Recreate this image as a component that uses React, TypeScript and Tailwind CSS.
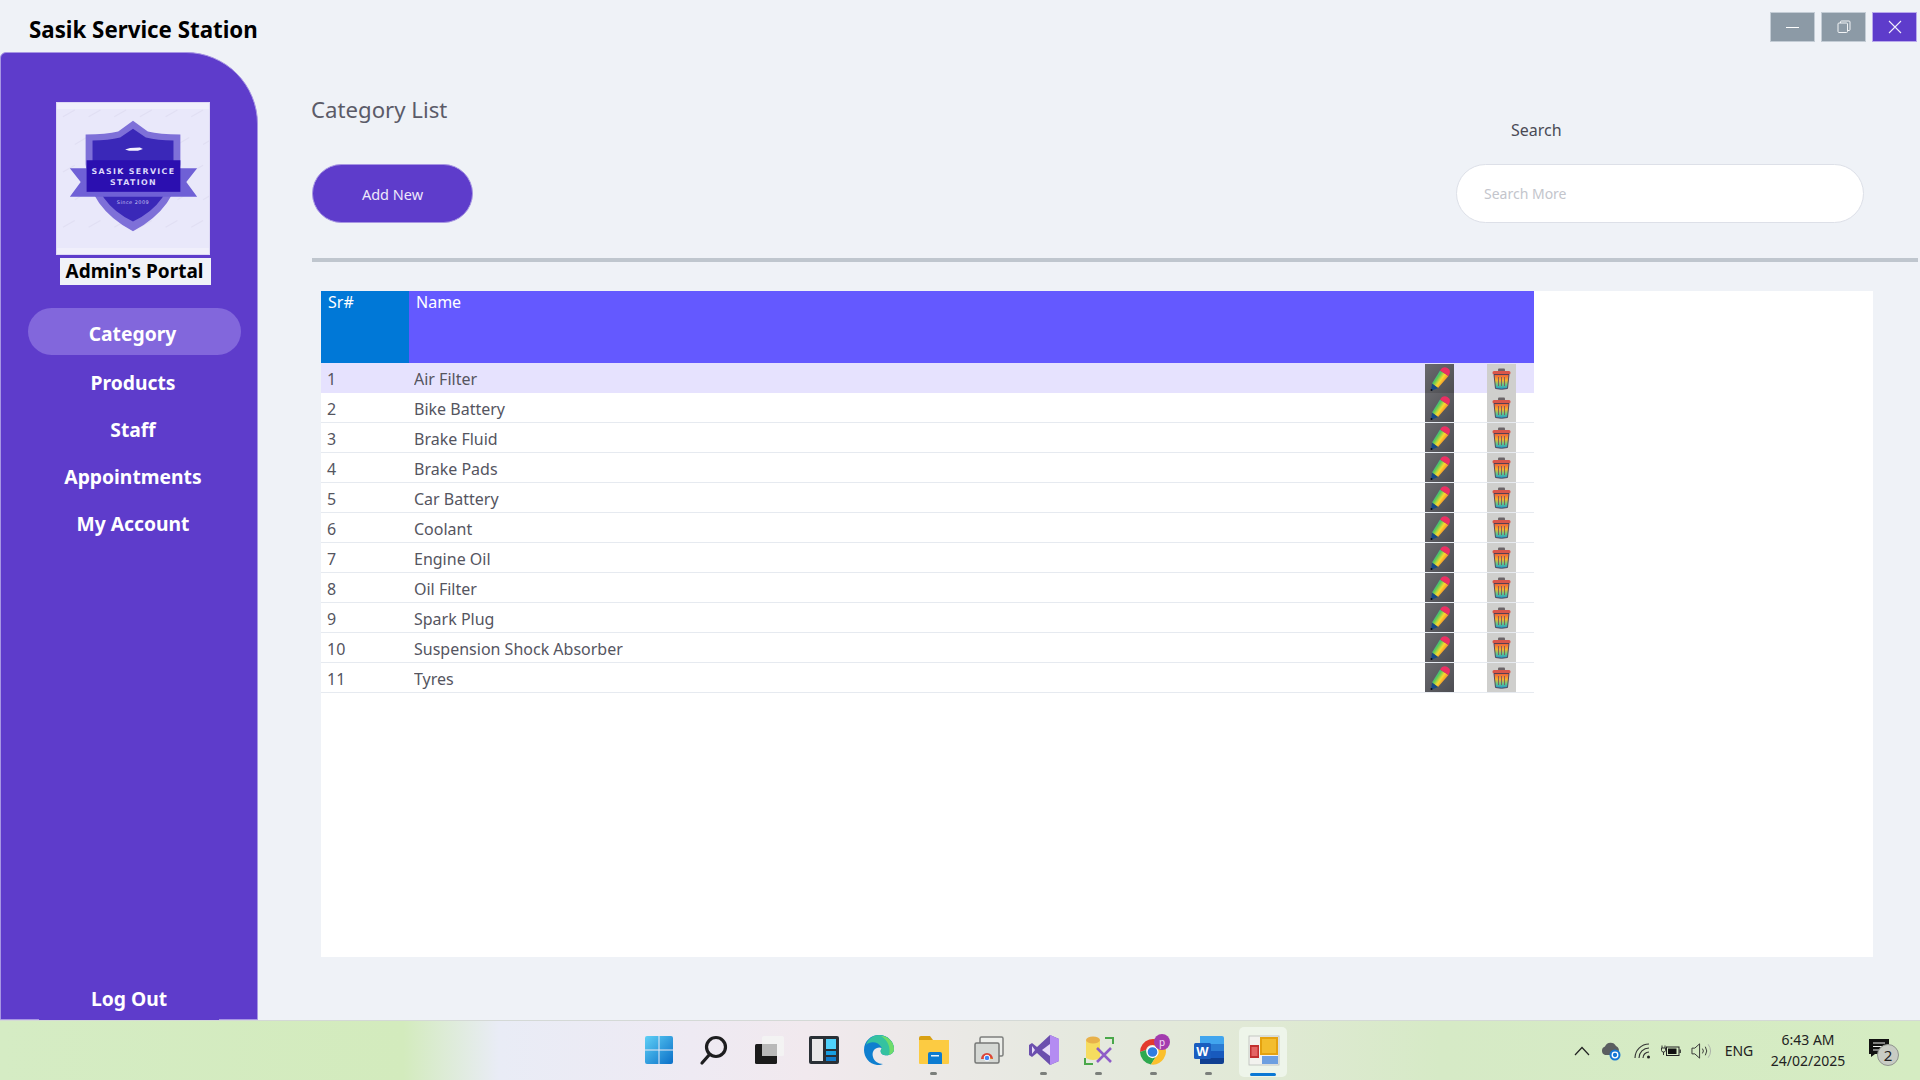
import { useId } from 'react'

const categories = [
  'Air Filter',
  'Bike Battery',
  'Brake Fluid',
  'Brake Pads',
  'Car Battery',
  'Coolant',
  'Engine Oil',
  'Oil Filter',
  'Spark Plug',
  'Suspension Shock Absorber',
  'Tyres',
]

const navItems = ['Category', 'Products', 'Staff', 'Appointments', 'My Account']

const watermark = Array.from({ length: 30 }, (_, i) => ({
  x: 6 + (i % 6) * 26 + (Math.floor(i / 6) % 2) * 12,
  y: 14 + Math.floor(i / 6) * 28,
}))

function Logo() {
  return (
    <svg viewBox="0 0 154 153" className="w-[152px] h-[151px] block">
      <rect width="154" height="153" fill="#f0effb" />
      <rect y="6" width="154" height="141" fill="#e9e8fa" />
      {watermark.map((p) => (
        <path key={`${p.x}-${p.y}`} d={`M${p.x} ${p.y} l12 -7`} stroke="#e1dff3" strokeWidth="1.2" />
      ))}
      <path d="M77 18 L92 29 Q104 32 125 32 L125 62 Q122 106 77 130 Q32 106 29 62 L29 32 Q50 32 62 29 Z" fill="#7e70d8" />
      <path d="M77 26 L90 35 Q102 38 118 38 L118 62 Q115 102 77 120 Q39 102 36 62 L36 38 Q52 38 64 35 Z" fill="#3a28b8" />
      <path d="M13 66 L142 66 L131 80 L142 95 L13 95 L24 80 Z" fill="#6f60d6" />
      <rect x="30" y="58" width="95" height="32" fill="#2b0fb0" />
      <path d="M69 47 L74 45.5 L84 45 L87 46.5 L82 48.5 L73 48.5 Z" fill="#f4f2ff" />
      <text x="77.5" y="72" textAnchor="middle" fontSize="8" fontWeight="700" letterSpacing="1.35" fill="#dcd8fb" fontFamily="'DejaVu Sans', sans-serif">SASIK SERVICE</text>
      <text x="77.5" y="83" textAnchor="middle" fontSize="8" fontWeight="700" letterSpacing="1.35" fill="#dcd8fb" fontFamily="'DejaVu Sans', sans-serif">STATION</text>
      <text x="77" y="102" textAnchor="middle" fontSize="5" letterSpacing="0.5" fill="#c9c3f2" fontFamily="'DejaVu Sans', sans-serif">Since 2009</text>
    </svg>
  )
}

function PencilIcon() {
  const id = useId()
  return (
    <div className="w-[29px] h-[29px] bg-[linear-gradient(135deg,#6a6a6e,#4d4d52)]">
      <svg viewBox="0 0 29 29" className="w-[29px] h-[29px] blur-[0.4px]">
        <defs>
          <linearGradient id={id} x1="0.1" y1="0.2" x2="0.9" y2="0.8">
            <stop offset="0" stopColor="#2f8fe0" />
            <stop offset="0.3" stopColor="#54c85a" />
            <stop offset="0.55" stopColor="#f7d92e" />
            <stop offset="0.8" stopColor="#f78a2a" />
            <stop offset="1" stopColor="#e8384e" />
          </linearGradient>
        </defs>
        <path d="M15 6.5 L23.5 12 L13 24 L7 19.5 Z" fill={`url(#${id})`} />
        <path d="M17 4 Q20 2.5 22.5 4 L24.5 5.8 Q25.5 8.5 24 11 L23.5 12 L15 6.5 Z" fill="#ea2f63" />
        <path d="M7 19.5 L13 24 L6 27 Z" fill="#174a86" />
        <circle cx="6.5" cy="26" r="1" fill="#0d0d12" />
      </svg>
    </div>
  )
}

function TrashIcon() {
  const id = useId()
  return (
    <div className="w-[29px] h-[29px] bg-[#cfcfcd]">
      <svg viewBox="0 0 29 29" className="w-[29px] h-[29px] blur-[0.4px]">
        <defs>
          <linearGradient id={id} x1="0" y1="0" x2="0" y2="1">
            <stop offset="0" stopColor="#ee5a3c" />
            <stop offset="0.4" stopColor="#f8b32e" />
            <stop offset="0.7" stopColor="#5ec98a" />
            <stop offset="1" stopColor="#1f8fd6" />
          </linearGradient>
        </defs>
        <rect x="11" y="4.5" width="7" height="3" rx="1" fill="#6b6468" />
        <rect x="5.5" y="7" width="18" height="3.6" rx="1.5" fill="#d9564a" />
        <path d="M7 10.5 L22 10.5 L20.5 24.5 Q14.5 26 8.5 24.5 Z" fill={`url(#${id})`} stroke="#4a3a50" strokeWidth="0.9" />
        <path d="M11.5 13 V22 M14.5 13 V22 M17.5 13 V22" stroke="#7a5560" strokeWidth="0.9" />
      </svg>
    </div>
  )
}

function WindowButtons() {
  return (
    <div className="flex gap-[6px] pr-[3px] pt-3">
      <button className="w-[45px] h-[30px] bg-[#8c9aa6] border border-[#c3ccd5] flex items-center justify-center">
        <span className="block w-[13px] h-px bg-white" />
      </button>
      <button className="w-[45px] h-[30px] bg-[#8c9aa6] border border-[#c3ccd5] flex items-center justify-center">
        <svg viewBox="0 0 14 14" className="w-[14px] h-[14px]" fill="none" stroke="#f2f4f6" strokeWidth="1">
          <rect x="1" y="3" width="9.5" height="9.5" rx="1" />
          <path d="M3.5 3 V2 Q3.5 1 4.5 1 H12 Q13 1 13 2 V9.5 Q13 10.5 12 10.5 H10.5" />
        </svg>
      </button>
      <button className="w-[45px] h-[30px] bg-[#5e3ccb] border border-[#b9a9ec] flex items-center justify-center">
        <svg viewBox="0 0 14 14" className="w-[14px] h-[14px]" stroke="#f2eefc" strokeWidth="1.1">
          <path d="M1 1 L13 13 M13 1 L1 13" />
        </svg>
      </button>
    </div>
  )
}

function Sidebar() {
  return (
    <aside className="w-[258px] h-full bg-[#5e3ccb] border border-[#a796e3] rounded-tl-[6px] rounded-tr-[72px] flex flex-col items-start -mb-px relative">
      <div className="mt-[49px] ml-[55px] border border-[#ddd8f5]">
        <Logo />
      </div>
      <div className="w-[151px] h-[27px] mt-[3px] ml-[59px] pr-[2px] bg-[#f0f2f8] text-black font-bold text-[19px] leading-[27px] text-center">
        Admin's Portal
      </div>
      <nav className="w-full pl-[8px] flex flex-col items-center mt-[23px] text-white font-bold text-[19.3px]">
        {navItems.map((item, i) => (
          <a
            key={item}
            className={
              i === 0
                ? 'w-[213px] h-[47px] ml-[2px] pr-[3px] pt-[5px] rounded-full bg-[#8267dc] flex items-center justify-center'
                : `h-[47px] pt-[5px] flex items-center justify-center ${i === 1 ? 'mt-[2px]' : ''}`
            }
          >
            {item}
          </a>
        ))}
      </nav>
      <div className="mt-auto ml-[38px] w-[180px] h-[42px] -mb-px bg-[#5e3ccb] text-white font-bold text-[19.3px] flex items-center justify-center">
        Log Out
      </div>
    </aside>
  )
}

function CategoryTable() {
  return (
    <div className="ml-[10px] mr-[47px] mt-[29px] h-[666px] bg-white">
      <div className="w-[1213px]">
        <div className="h-[72px] flex text-white text-[16px] leading-none">
          <div className="w-[88px] bg-[#0078d7] pl-[7px] pt-[3px]">Sr#</div>
          <div className="flex-1 bg-[#6459ff] pl-[7px] pt-[3px]">Name</div>
        </div>
        {categories.map((name, i) => (
          <div
            key={name}
            className={`h-[30px] flex items-center text-[16px] text-[#55555f] ${
              i === 0 ? 'bg-[#e6e2fe]' : 'border-b border-[#e6eaf0]'
            }`}
          >
            <div className="w-[93px] pl-[6px] pt-[2px]">{i + 1}</div>
            <div className="flex-1 truncate pt-[2px]">{name}</div>
            <PencilIcon />
            <div className="w-[33px]" />
            <TrashIcon />
            <div className="w-[18px]" />
          </div>
        ))}
      </div>
    </div>
  )
}

function TaskIcon({ children, dot, active }: { children: React.ReactNode; dot?: boolean; active?: boolean }) {
  return (
    <div className="w-[55px] h-[60px] flex items-center justify-center relative">
      {active && <div className="absolute left-[3px] top-[6px] w-[48px] h-[50px] rounded-[5px] bg-[#eef5ea]" />}
      <div className="relative w-[32px] h-[32px] -mt-[2px]">{children}</div>
      {dot && <span className="absolute left-[24px] bottom-[6px] w-[7px] h-[3px] rounded-full bg-[#7b7f7b]" />}
      {active && <span className="absolute left-[14px] bottom-[5px] w-[26px] h-[3px] rounded-full bg-[#0a78d4]" />}
    </div>
  )
}

function Taskbar() {
  const g = useId()
  return (
    <footer className="h-[60px] shrink-0 border-t border-[#d4d9d6] flex items-center bg-[linear-gradient(90deg,#d5ecc4_0%,#d3ebbd_21%,#e9ecf6_26%,#eeeaf3_36%,#f1e9ee_42%,#e6e9e0_55%,#e1e9d6_65%,#d6eac6_75%,#d5ecc2_100%)]">
      <div className="ml-[631px] flex">
        <TaskIcon>
          <svg viewBox="0 0 32 32">
            <defs>
              <linearGradient id={g} x1="0" y1="0" x2="1" y2="1">
                <stop offset="0" stopColor="#5fd0f6" />
                <stop offset="1" stopColor="#0a6fc8" />
              </linearGradient>
            </defs>
            <path d="M2 4 Q2 2 4 2 H15.5 V15.5 H2 Z M16.5 2 H28 Q30 2 30 4 V15.5 H16.5 Z M2 16.5 H15.5 V30 H4 Q2 30 2 28 Z M16.5 16.5 H30 V28 Q30 30 28 30 H16.5 Z" fill={`url(#${g})`} />
          </svg>
        </TaskIcon>
        <TaskIcon>
          <svg viewBox="0 0 32 32" fill="none" stroke="#1d1d1f" strokeWidth="3.2" strokeLinecap="round">
            <circle cx="18" cy="13" r="9.5" />
            <path d="M11.5 20.5 L4 29" />
          </svg>
        </TaskIcon>
        <TaskIcon>
          <svg viewBox="0 0 32 32">
            <rect x="2" y="10" width="22" height="20" rx="1.5" fill="#1b1b1b" />
            <rect x="9" y="2" width="22" height="20" rx="1.5" fill="#f4f6f4" opacity="0.75" />
            <rect x="9" y="10" width="15" height="12" fill="#b9b9b9" />
          </svg>
        </TaskIcon>
        <TaskIcon>
          <svg viewBox="0 0 32 32">
            <rect x="1" y="2" width="30" height="28" rx="2" fill="#2a3036" />
            <rect x="4" y="5" width="11" height="22" fill="#e8e8e8" />
            <rect x="18" y="5" width="10" height="10" fill="#4fd2fb" />
            <rect x="18" y="17" width="10" height="4" fill="#17a0e2" />
            <rect x="18" y="23" width="10" height="4" fill="#0f7dcc" />
          </svg>
        </TaskIcon>
        <TaskIcon>
          <svg viewBox="0 0 32 32">
            <path d="M16 1 C25 1 31 8 31 15 C31 20 26 22 21 21 C17 20 17 16 19 14 C14 12 8 16 10 23 C11 27 15 30 20 30 C18 31 16 31 14 31 C6 30 1 23 1 16 C1 7 8 1 16 1 Z" fill="#0f7fcf" />
            <path d="M3 11 C5 4 11 1 16 1 C25 1 31 8 31 15 C31 20 26 22 21 21 C17 20 17 16 19 14 C15 7 7 7 3 11 Z" fill="#35c2a0" />
            <path d="M18 2 C25 2 31 8 31 15 C31 18 29 20 26 21 C28 14 25 6 18 2 Z" fill="#6fdc6a" />
          </svg>
        </TaskIcon>
        <TaskIcon dot>
          <svg viewBox="0 0 32 32">
            <path d="M1 4 Q1 2 3 2 H12 L15 6 H1 Z" fill="#d9a012" />
            <path d="M1 6 H31 V29 Q31 30 30 30 H2 Q1 30 1 29 Z" fill="#fccb42" />
            <path d="M10 20 Q10 18 12 18 H22 Q24 18 24 20 V30 H10 Z" fill="#0c7cd1" />
            <rect x="13" y="21" width="8" height="1.5" fill="#e6f3fb" />
          </svg>
        </TaskIcon>
        <TaskIcon>
          <svg viewBox="0 0 32 32">
            <rect x="7" y="3" width="23" height="19" rx="1.5" fill="#eceeea" stroke="#7d7f7d" strokeWidth="1.5" />
            <rect x="2" y="9" width="24" height="20" rx="1.5" fill="#d5d8d4" stroke="#757775" strokeWidth="1.5" />
            <path d="M8 25 A6 6 0 0 1 20 25 Z" fill="#db4437" />
            <path d="M14 25 A6 6 0 0 1 20 25 Z" fill="#f4b400" />
            <circle cx="14" cy="24" r="2.8" fill="#4285f4" stroke="#fff" />
          </svg>
        </TaskIcon>
        <TaskIcon dot>
          <svg viewBox="0 0 32 32">
            <path d="M22 1 L31 5 V27 L22 31 L9 19 L4 23 L1 21 V11 L4 9 L9 13 Z" fill="#6b4fae" />
            <path d="M22 1 L31 5 V27 L22 31 Z" fill="#b48cf2" />
            <path d="M22 10 L14 16 L22 22 Z" fill="#e7dcf9" />
            <path d="M4 12 L7 16 L4 20 Z" fill="#e7dcf9" />
          </svg>
        </TaskIcon>
        <TaskIcon dot>
          <svg viewBox="0 0 32 32" fill="none">
            <path d="M22 4 H30 V10 M2 24 V30 H10" stroke="#4aa84a" strokeWidth="2" />
            <path d="M3 6 Q10 2 17 6 V24 Q10 28 3 24 Z" fill="#f6dc5f" />
            <ellipse cx="10" cy="6" rx="7" ry="3.5" fill="#e8b14a" />
            <path d="M14 28 L28 14 M28 28 L14 14" stroke="#8e5cc8" strokeWidth="2.6" />
          </svg>
        </TaskIcon>
        <TaskIcon dot>
          <svg viewBox="0 0 32 32">
            <path d="M2 18 A13 13 0 0 1 26 11 L15 11 A7 7 0 0 0 8 16 Z" fill="#e33b2e" />
            <path d="M2 18 A13 13 0 0 0 13 30.5 L19 21 A7 7 0 0 1 8 16 Z" fill="#2ea94f" />
            <path d="M26 11 A13 13 0 0 1 13 30.5 L19 21 A7 7 0 0 0 15 11 Z" fill="#fbc02d" />
            <circle cx="14.5" cy="18" r="5.5" fill="#2f7de1" stroke="#fff" strokeWidth="1.3" />
            <circle cx="24" cy="8" r="8" fill="#a33cae" />
            <text x="24" y="11.5" textAnchor="middle" fontSize="10" fill="#f3dff6" fontFamily="'Noto Sans', sans-serif">p</text>
          </svg>
        </TaskIcon>
        <TaskIcon dot>
          <svg viewBox="0 0 32 32">
            <path d="M7 2 H29 Q31 2 31 4 V10 H7 Z" fill="#41a5ee" />
            <rect x="7" y="10" width="24" height="7" fill="#2b7cd3" />
            <rect x="7" y="17" width="24" height="7" fill="#185abd" />
            <path d="M7 24 H31 V28 Q31 30 29 30 H7 Z" fill="#103f91" />
            <rect x="1" y="9" width="17" height="16" rx="1.5" fill="#1a5dbf" />
            <text x="9.5" y="21.5" textAnchor="middle" fontSize="13" fontWeight="700" fill="#fff" fontFamily="'Liberation Sans', sans-serif">W</text>
          </svg>
        </TaskIcon>
        <TaskIcon active>
          <svg viewBox="0 0 32 32">
            <rect x="1" y="2" width="30" height="29" fill="#f2f2ee" stroke="#b9bdb9" strokeWidth="0.8" />
            <rect x="12" y="3" width="18" height="18" fill="#e5a20f" />
            <rect x="14" y="5" width="14" height="14" fill="#f3bd2d" />
            <rect x="2" y="11" width="9" height="13" fill="#c22f2f" />
            <rect x="3.5" y="13" width="6" height="9" fill="#e46464" />
            <rect x="14" y="22" width="16" height="8" fill="#6d9fe0" />
          </svg>
        </TaskIcon>
      </div>
      <div className="ml-auto flex items-center text-[#222] font-['Noto_Sans',sans-serif]">
        <svg viewBox="0 0 16 10" className="w-[16px] h-[10px] mr-[10px]" fill="none" stroke="#222" strokeWidth="1.2"><path d="M1 9 L8 1.5 L15 9" /></svg>
        <svg viewBox="0 0 22 20" className="w-[22px] h-[20px] mr-[12px]">
          <path d="M5 14 A4.5 4.5 0 0 1 5 5.5 A6 6 0 0 1 16 5 A4.5 4.5 0 0 1 18 12 L14 14 Z" fill="#5a5e60" />
          <circle cx="15" cy="14" r="5.5" fill="#1478d4" />
          <circle cx="15" cy="14" r="2.8" fill="none" stroke="#fff" strokeWidth="1.3" />
        </svg>
        <svg viewBox="0 0 18 16" className="w-[18px] h-[16px] mr-[9px]" fill="none" stroke="#333" strokeWidth="1.1">
          <path d="M1 15 A14 14 0 0 1 15 1 M5 15 A10 10 0 0 1 15 5 M9 15 A6 6 0 0 1 15 9" />
          <circle cx="14.5" cy="14" r="1.5" fill="#222" stroke="none" />
        </svg>
        <svg viewBox="0 0 20 14" className="w-[20px] h-[14px] mr-[10px]">
          <path d="M1 1.5 V4 M4 1.5 V4 M0.5 4 H4.5 V6.5 Q4.5 8 2.5 8 Q0.5 8 0.5 6.5 Z M2.5 8 V11" stroke="#222" strokeWidth="0.9" fill="none" />
          <rect x="5.5" y="3" width="12.5" height="8.5" fill="none" stroke="#222" strokeWidth="1" />
          <rect x="7" y="4.5" width="8.5" height="5.5" fill="#111" />
          <rect x="18.5" y="5.5" width="1.3" height="3.5" fill="#222" />
        </svg>
        <svg viewBox="0 0 22 18" className="w-[21px] h-[18px] mr-[10px]" fill="none" stroke="#333" strokeWidth="1">
          <path d="M1 6 H4 L9 1.5 V16.5 L4 12 H1 Z" />
          <path d="M12 6.5 Q14 9 12 11.5 M15 4.5 Q18 9 15 13.5" />
          <path d="M18 2 Q23 9 18 16" stroke="#aab0a8" />
        </svg>
        <span className="text-[14px] w-[34px] text-center mr-[13px]">ENG</span>
        <div className="w-[78px] text-[14px] leading-[21px] text-center mr-[21px] -mt-[1px]">
          <div>6:43 AM</div>
          <div>24/02/2025</div>
        </div>
        <div className="relative w-[30px] h-[30px] mr-[22px]">
          <svg viewBox="0 0 22 20" className="w-[22px] h-[20px] mt-[2px]">
            <path d="M1 1 H21 V16 H7 L3 19 V16 H1 Z" fill="#111" />
            <path d="M5 5 H17 M5 8.5 H17 M5 12 H13" stroke="#f0f0f0" strokeWidth="1" />
          </svg>
          <span className="absolute left-[9px] top-[8px] w-[22px] h-[22px] rounded-full bg-[#c8ccc4] border border-[#8f938d] text-[15px] leading-[20px] text-center">2</span>
        </div>
      </div>
    </footer>
  )
}

export default function App() {
  return (
    <div className="w-[1920px] h-[1080px] overflow-hidden flex flex-col bg-[#eff2f7] font-['Noto_Sans',sans-serif]">
      <div className="flex-1 min-h-0 flex flex-col">
        <header className="h-[52px] shrink-0 flex justify-between">
          <h1 className="pl-[29px] pt-[14px] text-[22.3px] leading-[32px] font-bold text-black">Sasik Service Station</h1>
          <WindowButtons />
        </header>
        <div className="flex-1 min-h-0 flex">
          <Sidebar />
          <main className="flex-1 pl-[53px] min-w-0">
            <h2 className="mt-[41px] text-[22.2px] leading-[34px] text-[#5b5b68]">Category List</h2>
            <div className="flex items-start justify-between mt-[-3px]">
              <button className="mt-[40px] ml-[1px] pt-[2px] w-[161px] h-[59px] rounded-[30px] bg-[#5e3ccb] border border-[#a796e3] text-[#eee9fb] text-[14.5px]">
                Add New
              </button>
              <div className="flex flex-col mr-[56px]">
                <label className="ml-[55px] w-[60px] -mt-[6px] text-[16px] leading-[24px] text-[#4a4a55]">Search</label>
                <input
                  readOnly
                  placeholder="Search More"
                  className="mt-[22px] w-[408px] h-[59px] rounded-[30px] bg-white border border-[#dde0e8] pl-[27px] text-[14px] outline-none placeholder:text-[#c3c5cc]"
                />
              </div>
            </div>
            <div className="h-[4px] mt-[35px] ml-[1px] mr-[2px] bg-[#bfc6ce]" />
            <CategoryTable />
          </main>
        </div>
      </div>
      <Taskbar />
    </div>
  )
}
